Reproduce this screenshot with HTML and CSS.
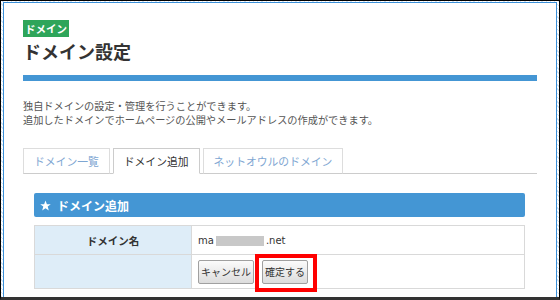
FILE: index.html
```html
<!DOCTYPE html>
<html lang="ja">
<head>
  <meta charset="UTF-8" />
  <title>ドメイン設定</title>
  <link rel="stylesheet" href="styles.css">
</head>
<body>
  <div class="frame">
    <div class="window">
      <span class="badge">ドメイン</span>
      <h1 class="title">ドメイン設定</h1>
      <div class="rule"></div>
      <p class="lead">独自ドメインの設定・管理を行うことができます。<br>追加したドメインでホームページの公開やメールアドレスの作成ができます。</p>

      <ul class="tabs">
        <li class="tab">ドメイン一覧</li>
        <li class="tab active">ドメイン追加</li>
        <li class="tab">ネットオウルのドメイン</li>
      </ul>

      <div class="panel">
        <h2 class="panel-head">
          <svg class="star" width="11" height="11" viewBox="0 0 24 24"><polygon points="12,1 15,9 23.5,9.2 16.8,14.4 19.2,22.8 12,17.9 4.8,22.8 7.2,14.4 0.5,9.2 9,9" fill="#fff"/></svg>
          ドメイン追加
        </h2>
        <table class="form">
          <tr class="row-name">
            <th>ドメイン名</th>
            <td class="domain">ma<span class="mask"></span>.net</td>
          </tr>
          <tr class="row-actions">
            <th></th>
            <td>
              <div class="actions">
                <button class="btn">キャンセル</button>
                <span class="mark"><button class="btn">確定する</button></span>
              </div>
            </td>
          </tr>
        </table>
      </div>
    </div>
  </div>
</body>
</html>
```

FILE: styles.css
```css
* {
  box-sizing: border-box;
}
body {
  margin: 0;
  background: #fff;
  font-family: "Noto Sans CJK JP", sans-serif;
}
.frame {
  width: 560px;
  height: 300px;
  border: 1px solid #000;
  border-bottom: 3px solid #333;
  padding: 1px 2px 0;
  background: repeating-linear-gradient(45deg, #d3e4f4 0 1px, #fff 1px 3px);
}
.window {
  height: 100%;
  background: #fff;
  border: 1px solid #3a8fd8;
  border-bottom: 0;
  padding: 17px 19px 0 19px;
}
.badge {
  display: block;
  width: fit-content;
  background: #2ea55a;
  color: #fff;
  font-size: 10.5px;
  font-weight: bold;
  line-height: 17px;
  padding: 0 2px;
}
.title {
  margin: 2px 0 0;
  font-size: 18px;
  line-height: 24px;
  color: #333;
  font-weight: bold;
}
.rule {
  height: 6px;
  margin-top: 12px;
  background: #4496d4;
}
.lead {
  margin: 18px 0 0;
  font-size: 10.2px;
  line-height: 14px;
  color: #555;
}
.tabs {
  list-style: none;
  margin: 21px 0 0;
  padding: 0;
  display: flex;
  gap: 3px;
  border-bottom: 1px solid #ccc;
}
.tab {
  height: 26px;
  line-height: 24px;
  padding: 0 10px;
  margin-bottom: -1px;
  border: 1px solid #ddd;
  border-bottom-color: #ccc;
  background: #fff;
  font-size: 10.8px;
  color: #7ea6d2;
}
.tab.active {
  color: #333;
  border-color: #ccc;
  border-bottom-color: #fff;
}
.panel {
  padding: 19px 12px 0 11px;
}
.panel-head {
  margin: 0;
  height: 24px;
  padding-left: 6px;
  display: flex;
  align-items: center;
  gap: 6px;
  background: #4496d4;
  border-radius: 2px;
  color: #fff;
  font-size: 12px;
  font-weight: bold;
}
.form {
  width: 100%;
  margin-top: 8px;
  border-collapse: collapse;
}
.form th,
.form td {
  border: 1px solid #d9d9d9;
  padding: 0 6px;
}
.form th {
  width: 157px;
  background: #deedf8;
  font-size: 10.5px;
  color: #333;
}
.row-name {
  height: 29px;
}
.row-actions {
  height: 34px;
}
.domain {
  font-family: "DejaVu Sans", sans-serif;
  font-size: 10px;
  color: #333;
}
.mask {
  display: inline-block;
  width: 48px;
  height: 10px;
  margin: 0 2px;
  vertical-align: middle;
  background: #c8c8c8;
}
.actions {
  display: flex;
  align-items: center;
  gap: 8px;
}
.btn {
  height: 24px;
  padding: 0 2px;
  border: 1px solid #a0a0a0;
  border-radius: 2px;
  background: linear-gradient(#fbfbfb, #dcdcdc);
  font-family: inherit;
  font-size: 10px;
  color: #333;
}
.mark {
  position: relative;
  display: flex;
}
.mark::after {
  content: "";
  position: absolute;
  inset: -6px -9px -8px -7px;
  border: 4px solid #f00;
}
```
